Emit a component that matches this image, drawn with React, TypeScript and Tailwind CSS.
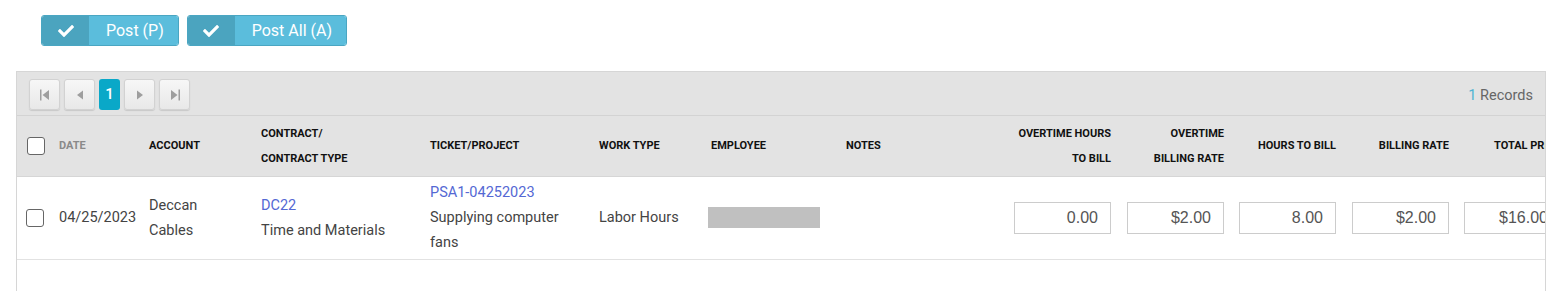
function CheckIcon() {
  return (
    <svg width="16" height="16" viewBox="0 0 512 512" fill="white">
      <path d="M173.9 439.4l-166.4-166.4c-10-10-10-26.2 0-36.2l36.2-36.2c10-10 26.2-10 36.2 0L192 312.7 432.1 72.6c10-10 26.2-10 36.2 0l36.2 36.2c10 10 10 26.2 0 36.2l-294.4 294.4c-10 10-26.2 10-36.2 0z" />
    </svg>
  );
}

function PostButton({ label }: { label: string }) {
  return (
    <button className="flex h-[31px] items-stretch overflow-hidden rounded-[3px] border border-[#4aa6c2] text-[16px] text-white">
      <span className="flex w-[47px] items-center justify-center bg-[#4ba4bf]">
        <CheckIcon />
      </span>
      <span className="flex items-center bg-[#5bbddc] pl-[17px] pr-[14px]">{label}</span>
    </button>
  );
}

function PagerButton({ children }: { children: React.ReactNode }) {
  return (
    <button className="flex h-[31px] w-[31px] items-center justify-center rounded-[3px] border border-[#d2d2d2] bg-gradient-to-b from-[#f7f7f7] to-[#e8e8e8] shadow-[0_1px_1px_rgba(0,0,0,0.12)]">
      {children}
    </button>
  );
}

function Box() {
  return <span className="block h-[18px] w-[18px] rounded-[3px] border border-[#666] bg-white" />;
}

function Amount({ value }: { value: string }) {
  return (
    <div className="ml-auto flex h-[32px] w-[97px] items-center justify-end border border-[#cccccc] bg-white pr-[12px] font-['Liberation_Sans',Arial,sans-serif] text-[16px] text-[#555]">
      {value}
    </div>
  );
}

const th = "pl-[7px] text-left align-middle";
const thr = "pr-[6px] text-right align-middle";

export default function App() {
  return (
    <div className="min-h-[291px] overflow-hidden bg-white font-['Roboto',sans-serif]">
      {/* Actions */}
      <div className="flex gap-2 pl-[41px] pt-[15px]">
        <PostButton label="Post (P)" />
        <PostButton label="Post All (A)" />
      </div>

      {/* Grid */}
      <div className="ml-4 mt-[25px] h-[260px] w-[1530px] overflow-hidden border border-[#d6d6d6]">
        <div className="flex h-[44px] items-start justify-between border-b border-[#d3d3d3] bg-[#e3e3e3] pl-[12px] pr-[12px] pt-[7px]">
          <div className="flex gap-[4px]">
            <PagerButton>
              <svg width="14" height="14" viewBox="0 0 14 14" fill="#9e9e9e">
                <rect x="2" y="1.5" width="1.5" height="11" />
                <path d="M11 2 L4.5 7 L11 12 Z" />
              </svg>
            </PagerButton>
            <PagerButton>
              <svg width="14" height="14" viewBox="0 0 14 14" fill="#9e9e9e">
                <path d="M10 2.5 L4 7 L10 11.5 Z" />
              </svg>
            </PagerButton>
            <button className="flex h-[31px] w-[21px] items-center justify-center rounded-[3px] bg-[#0aa8c8] text-[15px] font-medium text-white">
              1
            </button>
            <PagerButton>
              <svg width="14" height="14" viewBox="0 0 14 14" fill="#9e9e9e">
                <path d="M4 2.5 L10 7 L4 11.5 Z" />
              </svg>
            </PagerButton>
            <PagerButton>
              <svg width="14" height="14" viewBox="0 0 14 14" fill="#9e9e9e">
                <path d="M3 2 L9.5 7 L3 12 Z" />
                <rect x="10.5" y="1.5" width="1.5" height="11" />
              </svg>
            </PagerButton>
          </div>
          <div className="pt-[6px] text-[14.5px] text-[#666]">
            <span className="text-[#4fb3d2]">1</span> Records
          </div>
        </div>

        <table className="w-[1550px] table-fixed border-collapse">
          <colgroup>
            <col className="w-[35px]" />
            <col className="w-[90px]" />
            <col className="w-[112px]" />
            <col className="w-[169px]" />
            <col className="w-[169px]" />
            <col className="w-[112px]" />
            <col className="w-[135px]" />
            <col className="w-[166px]" />
            <col className="w-[112px]" />
            <col className="w-[113px]" />
            <col className="w-[112px]" />
            <col className="w-[113px]" />
            <col className="w-[112px]" />
          </colgroup>
          <thead>
            <tr className="h-[60px] border-b border-[#d6d6d6] bg-[#e3e3e3] text-[11px] font-bold uppercase leading-[25px] text-[#111]">
              <th className="pl-[10px] align-middle">
                <Box />
              </th>
              <th className={`${th} text-[#8a8a8a]`}>Date</th>
              <th className={th}>Account</th>
              <th className={th}>
                Contract/
                <br />
                Contract Type
              </th>
              <th className={th}>Ticket/Project</th>
              <th className={th}>Work Type</th>
              <th className={th}>Employee</th>
              <th className={th}>Notes</th>
              <th className={thr}>
                Overtime Hours
                <br />
                To Bill
              </th>
              <th className={thr}>
                Overtime
                <br />
                Billing Rate
              </th>
              <th className={thr}>Hours To Bill</th>
              <th className={thr}>Billing Rate</th>
              <th className={`${thr} whitespace-nowrap`}>Total Price</th>
            </tr>
          </thead>
          <tbody>
            <tr className="h-[83px] border-b border-[#e2e2e2] text-[14.5px] leading-[25px] text-[#444]">
              <td className="pl-[9px] align-middle">
                <Box />
              </td>
              <td className={th}>04/25/2023</td>
              <td className={th}>
                <div className="w-[60px]">Deccan Cables</div>
              </td>
              <td className={th}>
                <div className="text-[#5468d4]">DC22</div>
                <div>Time and Materials</div>
              </td>
              <td className={th}>
                <div className="text-[#5468d4]">PSA1-04252023</div>
                <div className="w-[140px]">Supplying computer fans</div>
              </td>
              <td className={th}>Labor Hours</td>
              <td className="pl-[4px] align-middle">
                <div className="h-[21px] w-[112px] bg-[#c0c0c0]" />
              </td>
              <td className={th}></td>
              <td className={thr}>
                <Amount value="0.00" />
              </td>
              <td className={thr}>
                <Amount value="$2.00" />
              </td>
              <td className={thr}>
                <Amount value="8.00" />
              </td>
              <td className={thr}>
                <Amount value="$2.00" />
              </td>
              <td className={thr}>
                <Amount value="$16.00" />
              </td>
            </tr>
          </tbody>
        </table>
      </div>
    </div>
  );
}
